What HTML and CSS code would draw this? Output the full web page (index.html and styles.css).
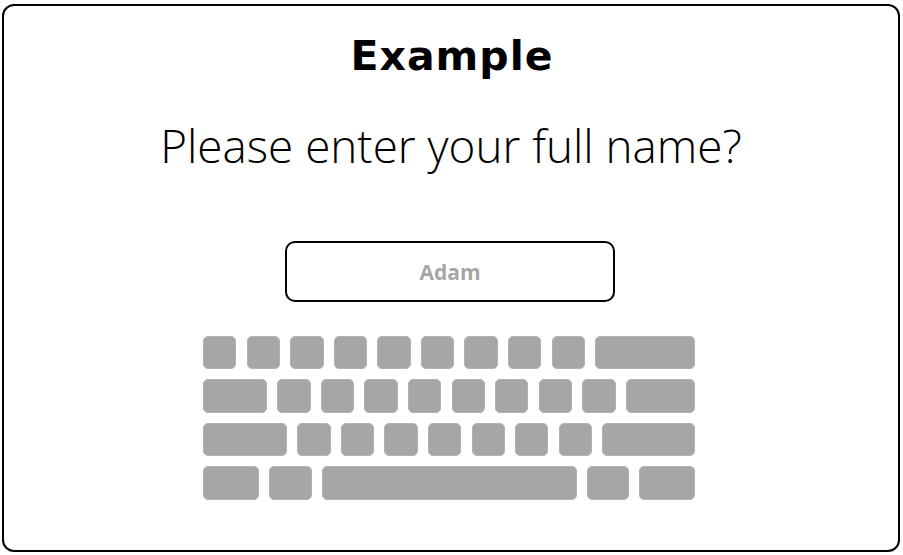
FILE: index.html
```html
<!DOCTYPE html>
<html lang="en">
<head>
<meta charset="utf-8">
<title>Example</title>
<link rel="stylesheet" href="styles.css">
</head>
<body>
<div class="frame">
  <h1 class="title">Example</h1>
  <p class="question">Please enter your full name?</p>
  <div class="field"><span class="field-text">Adam</span></div>
  <div class="keyboard">
    <div class="row">
      <div class="key"></div><div class="key"></div><div class="key"></div><div class="key"></div><div class="key"></div><div class="key"></div><div class="key"></div><div class="key"></div><div class="key"></div><div class="key grow"></div>
    </div>
    <div class="row">
      <div class="key w64"></div><div class="key"></div><div class="key"></div><div class="key"></div><div class="key"></div><div class="key"></div><div class="key"></div><div class="key"></div><div class="key"></div><div class="key grow"></div>
    </div>
    <div class="row">
      <div class="key w84"></div><div class="key"></div><div class="key"></div><div class="key"></div><div class="key"></div><div class="key"></div><div class="key"></div><div class="key"></div><div class="key grow"></div>
    </div>
    <div class="row">
      <div class="key w56"></div><div class="key w43"></div><div class="key grow"></div><div class="key w42"></div><div class="key w56"></div>
    </div>
  </div>
</div>
</body>
</html>
```
FILE: styles.css
```css
html, body {
  margin: 0;
  padding: 0;
  background: #ffffff;
}
body {
  width: 903px;
  height: 555px;
  overflow: hidden;
}
.frame {
  box-sizing: border-box;
  margin: 4px 0 0 2px;
  width: 898px;
  height: 548px;
  border: 2px solid #000;
  border-radius: 12px;
  display: flex;
  flex-direction: column;
  align-items: center;
}
.title {
  margin: 30px 0 0 2px;
  font-family: "DejaVu Sans", "Liberation Sans", sans-serif;
  font-weight: 700;
  font-size: 41px;
  line-height: 40px;
  letter-spacing: 1px;
  color: #000;
}
.question {
  margin: 46px 0 0;
  font-family: "Open Sans", sans-serif;
  font-weight: 300;
  font-size: 45.8px;
  line-height: 46px;
  color: #000;
}
.field {
  box-sizing: border-box;
  margin: 73px 2px 0 0;
  width: 330px;
  height: 61px;
  border: 2.5px solid #000;
  border-radius: 10px;
  display: flex;
  align-items: center;
  justify-content: center;
}
.field-text {
  font-family: "Open Sans", sans-serif;
  font-weight: 700;
  font-size: 21px;
  color: #a6a6a6;
}
.keyboard {
  margin: 34px 4px 0 0;
  width: 492px;
  display: flex;
  flex-direction: column;
  gap: 10px;
}
.row {
  display: flex;
  gap: 10.2px;
}
.key {
  box-sizing: border-box;
  width: 33.4px;
  height: 33.4px;
  background: #a6a6a6;
  border: 1px solid #b2b2b2;
  border-radius: 5px;
  flex: none;
}
.key.grow { flex: 1 1 auto; width: auto; }
.key.w64 { width: 64px; }
.key.w84 { width: 84px; }
.key.w56 { width: 56px; }
.key.w43 { width: 43px; }
.key.w42 { width: 42px; }
```
